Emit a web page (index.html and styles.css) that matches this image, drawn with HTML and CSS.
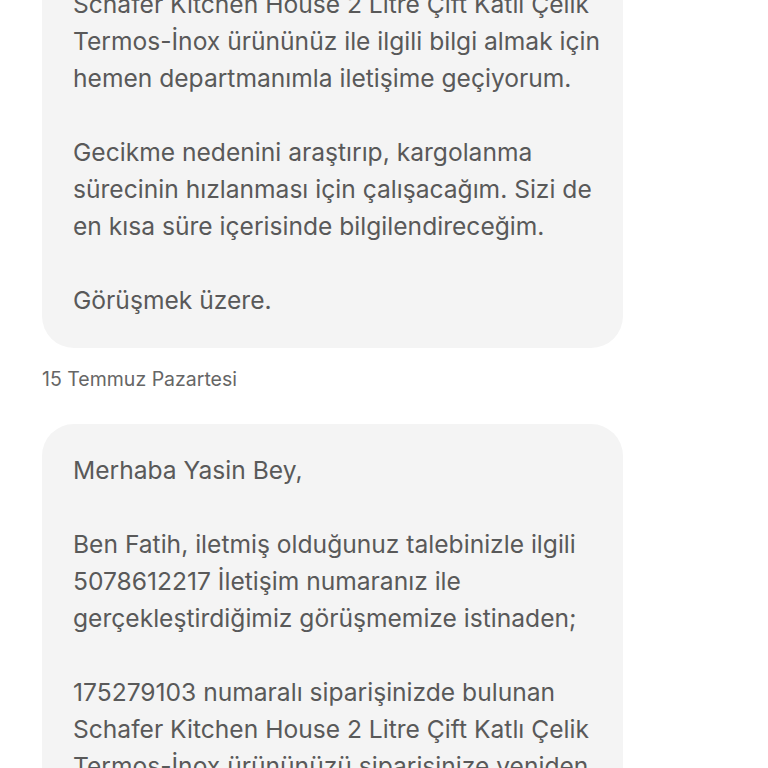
FILE: index.html
```html
<!DOCTYPE html>
<html lang="tr">
<head>
<meta charset="utf-8">
<link rel="stylesheet" href="styles.css">
</head>
<body>
<div class="thread">
  <div class="bubble bubble-cut">
    <p>Schafer Kitchen House 2 Litre Çift Katlı Çelik<br>Termos-İnox ürününüz ile ilgili bilgi almak için<br>hemen departmanımla iletişime geçiyorum.</p>
    <p>Gecikme nedenini araştırıp, kargolanma<br>sürecinin hızlanması için çalışacağım. Sizi de<br>en kısa süre içerisinde bilgilendireceğim.</p>
    <p>Görüşmek üzere.</p>
  </div>
  <div class="date">15 Temmuz Pazartesi</div>
  <div class="bubble">
    <p>Merhaba Yasin Bey,</p>
    <p>Ben Fatih, iletmiş olduğunuz talebinizle ilgili<br>5078612217 İletişim numaranız ile<br>gerçekleştirdiğimiz görüşmemize istinaden;</p>
    <p>175279103 numaralı siparişinizde bulunan<br>Schafer Kitchen House 2 Litre Çift Katlı Çelik<br>Termos-İnox ürününüzü siparişinize yeniden<br>ekleyerek kargoya verilmesini sağladım.</p>
  </div>
</div>
</body>
</html>
```

FILE: styles.css
```css
html, body {
  margin: 0;
  padding: 0;
  background: #ffffff;
  height: 768px;
  overflow: hidden;
}
.thread {
  padding-left: 42px;
  width: 581px;
  font-family: Inter, "Noto Sans", sans-serif;
}
.bubble {
  background: #f4f4f4;
  border-radius: 32px;
  padding: 28px 31px 29px 31px;
  color: #595959;
  font-size: 24.6px;
  line-height: 37px;
}
.bubble-cut {
  margin-top: -14px;
  padding-top: 0;
  border-top-left-radius: 0;
  border-top-right-radius: 0;
}
.bubble p {
  margin: 0 0 37px 0;
  white-space: nowrap;
}
.bubble p:last-child {
  margin-bottom: 0;
}
.date {
  margin: 19px 0 33px 0;
  font-size: 19.5px;
  line-height: 24px;
  color: #666666;
}
```
